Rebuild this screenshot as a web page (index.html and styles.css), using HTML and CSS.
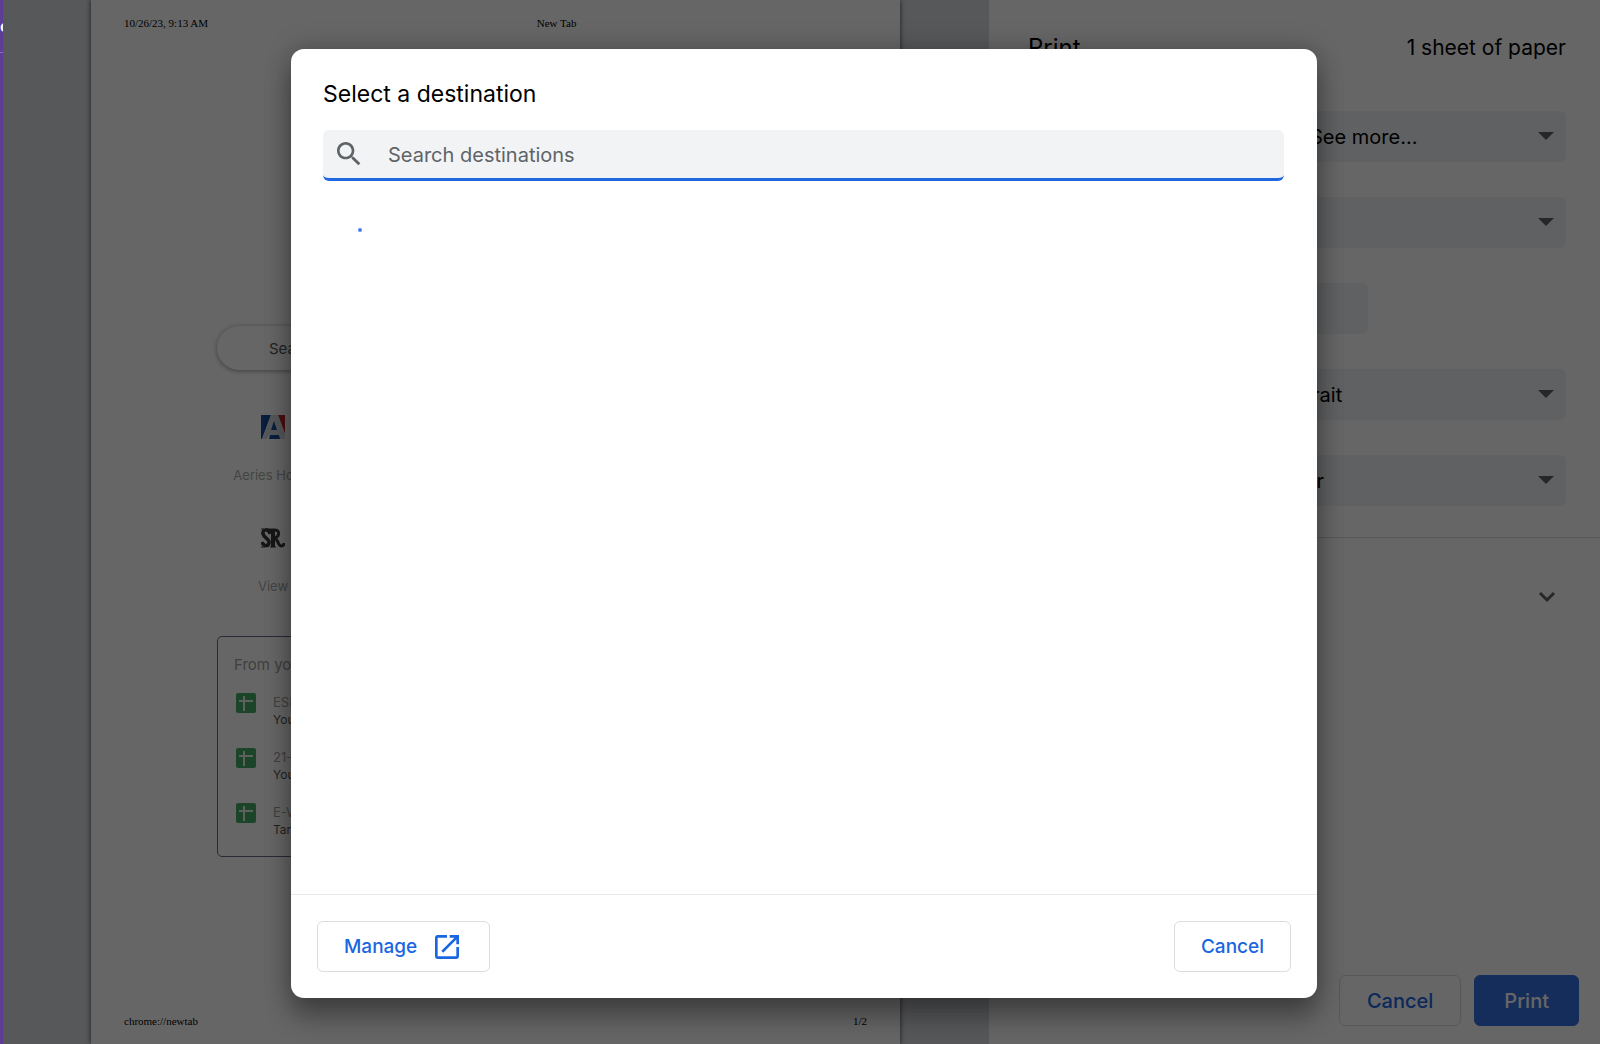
FILE: index.html
```html
<!DOCTYPE html>
<html lang="en">
<head>
<meta charset="utf-8">
<title>Print</title>
<link rel="stylesheet" href="styles.css">
</head>
<body>
<aside class="edge"><span class="edge-text">e</span></aside>
<div class="window">
  <main class="preview">
    <article class="sheet">
      <header class="sheet-head"><span>10/26/23, 9:13 AM</span><span>New Tab</span></header>
      <div class="newtab">
        <div class="omnibox">Search Google or type a URL</div>
        <div class="tile">
          <svg class="tile-icon" viewBox="0 0 24 24"><path fill="#1a4c9c" d="M0 0h10L1 24H0z"/><path fill="#c0242c" d="M17 0h7v19z"/><path fill="#d8dae2" d="M10 0h7l7 19v5h-5l-1-4H8l-2 4H1z"/><path fill="#1a4c9c" d="M13 6l3 9h-6zM9 20h9l1 4H8z"/></svg>
          <span>Aeries Home</span>
        </div>
        <div class="tile">
          <svg class="tile-icon" viewBox="0 0 24 24" fill="none" stroke="#3a3a3a"><path stroke-width="3.500" d="M9 8C8 2 1 3 2 8c1 4 7 5 6 9-1 4-6 3-7-1"/><path stroke-width="4" d="M12 3v18"/><path stroke-width="3" d="M8 4h6c5 0 5 7-1 8 4 0 4 8 7 8 2 0 3-1 3-3"/><path stroke-width="1" d="M0 21h4M9 21h6M0 3h3M8 3v5"/></svg>
          <span>View</span>
        </div>
        <section class="drive">
          <h2 class="drive-title">From your Google Drive</h2>
          <div class="file"><svg class="file-icon" viewBox="0 0 20 20"><rect width="20" height="20" rx="2" fill="#45aa66"/><path d="M3 8h14M8 3v15" stroke="#e4f2e8" stroke-width="2"/></svg><div><div class="file-name">ESL</div><div class="file-note">You opened</div></div></div>
          <div class="file"><svg class="file-icon" viewBox="0 0 20 20"><rect width="20" height="20" rx="2" fill="#45aa66"/><path d="M3 8h14M8 3v15" stroke="#e4f2e8" stroke-width="2"/></svg><div><div class="file-name">21-22</div><div class="file-note">You opened</div></div></div>
          <div class="file"><svg class="file-icon" viewBox="0 0 20 20"><rect width="20" height="20" rx="2" fill="#45aa66"/><path d="M3 8h14M8 3v15" stroke="#e4f2e8" stroke-width="2"/></svg><div><div class="file-name">E-Waste</div><div class="file-note">Tan edited</div></div></div>
        </section>
      </div>
      <footer class="sheet-foot"><span>chrome://newtab</span><span>1/2</span></footer>
    </article>
  </main>
  <form class="settings">
    <header class="settings-head"><h1 class="settings-title">Print</h1><span>1 sheet of paper</span></header>
    <div class="fields">
      <div class="field"><label for="dest">Destination</label><div class="control"><select id="dest" class="with-icon"><option>See more...</option></select></div></div>
      <div class="field"><label for="pages">Pages</label><div class="control"><select id="pages"><option>All</option></select></div></div>
      <div class="field"><label for="copies">Copies</label><div class="short"><input id="copies" type="text" value="1"></div></div>
      <div class="field"><label for="layout">Layout</label><div class="control"><select id="layout"><option>Portrait</option></select></div></div>
      <div class="field"><label for="color">Color</label><div class="control"><select id="color"><option>Color</option></select></div></div>
    </div>
    <button type="button" class="more"><span>More settings</span><svg width="24" height="24" viewBox="0 0 24 24"><path d="M5 8l7 7 7-7" fill="none" stroke="#5f6368" stroke-width="3"/></svg></button>
    <div class="actions"><button type="button" class="btn">Cancel</button><button type="button" class="btn primary">Print</button></div>
  </form>
  <div class="scrim">
    <section class="dialog" role="dialog" aria-labelledby="dialog-title">
      <div class="dialog-body">
        <h2 id="dialog-title" class="dialog-title">Select a destination</h2>
        <div class="search">
          <svg width="32" height="32" viewBox="0 0 24 24" fill="#5f6368"><path d="M15.500 14h-.79l-.28-.27C15.410 12.590 16 11.110 16 9.500 16 5.910 13.090 3 9.500 3S3 5.910 3 9.500 5.910 16 9.500 16c1.610 0 3.090-.59 4.230-1.570l.27.28v.79l5 4.990L20.490 19l-4.990-5zm-6 0C7.010 14 5 11.990 5 9.500S7.010 5 9.500 5 14 7.010 14 9.500 11.990 14 9.500 14z"/></svg>
          <input type="text" placeholder="Search destinations" aria-label="Search destinations">
        </div>
        <div class="spinner"></div>
      </div>
      <footer class="dialog-foot">
        <button type="button" class="btn">Manage<svg width="32" height="32" viewBox="0 0 24 24" fill="#1a66e0"><path d="M19 19H5V5h7V3H5c-1.110 0-2 .9-2 2v14c0 1.100.89 2 2 2h14c1.100 0 2-.9 2-2v-7h-2v7zM14 3v2h3.590l-9.830 9.830 1.410 1.410L19 6.410V10h2V3h-7z"/></svg></button>
        <button type="button" class="btn">Cancel</button>
      </footer>
    </section>
  </div>
</div>
</body>
</html>
```
FILE: styles.css
```css
* { box-sizing: border-box; }
body {
  margin: 0;
  min-height: 100vh;
  display: flex;
  font-family: Inter, "Liberation Sans", sans-serif;
  font-size: 20px;
  color: #000;
}
h1, h2 { margin: 0; font-weight: 400; }
input, select, button { font: inherit; color: inherit; }

.edge {
  width: 3px;
  padding-top: 14px;
  overflow: hidden;
  background: #5d3d96;
  color: #fff;
  font-size: 16px;
  font-weight: 600;
  line-height: 24px;
  display: flex;
  align-items: flex-start;
}
.edge-text {
  flex: 1;
  display: flex;
  justify-content: flex-end;
  height: 39px;
  border-bottom: 1px solid #8a70b8;
}

.window { position: relative; flex: 1; min-width: 0; display: flex; }

.preview { flex: 1; display: flex; padding: 0 89px 0 88px; background: #dadce0; }
.sheet {
  flex: 1;
  display: flex;
  flex-direction: column;
  padding: 16px 33px;
  background: #fff;
  box-shadow: 0 0 5px rgba(0, 0, 0, .7);
}
.sheet-head, .sheet-foot { font: 11px/14px "Liberation Serif", serif; }
.sheet-head { display: grid; grid-template-columns: 5fr 4fr; }
.sheet-foot { display: flex; justify-content: space-between; }
.newtab { flex: 1; padding: 296px 93px 0; }
.omnibox {
  height: 44px;
  padding-left: 52px;
  border-radius: 22px;
  line-height: 45px;
  font-size: 15px;
  color: #555;
  box-shadow: 0 1px 5px rgba(0, 0, 0, .4);
}
.tile {
  width: 112px;
  height: 111px;
  padding-top: 45px;
  display: flex;
  flex-direction: column;
  align-items: center;
  gap: 28px;
  font-size: 13px;
  line-height: 16px;
  color: #aaa;
}
.tile-icon { flex: none; width: 24px; height: 24px; }
.drive {
  height: 221px;
  margin-top: 44px;
  padding: 18px 16px;
  border: 1px solid #6c6590;
  border-radius: 5px;
}
.drive-title { font-size: 15px; line-height: 19px; color: #a0a0a0; }
.file { display: flex; gap: 17px; padding: 19px 2px 0; }
.file-icon { flex: none; width: 20px; height: 20px; }
.file-name, .file-note { line-height: 18px; }
.file-name { font-size: 13px; color: #a0a0a0; }
.file-note { font-size: 12px; color: #555; }

.settings { width: 611px; display: flex; flex-direction: column; background: #fff; }
.settings-head {
  display: flex;
  justify-content: space-between;
  align-items: center;
  padding: 32px 34px 0 39px;
  font-size: 21px;
  line-height: 32px;
}
.settings-title { font-size: 24px; }
.fields {
  display: flex;
  flex-direction: column;
  gap: 35px;
  margin-top: 47px;
  padding: 0 34px 31px 40px;
  border-bottom: 1px solid #dadce0;
}
.field { display: flex; align-items: center; justify-content: space-between; }
.control, .short { width: 318px; height: 51px; position: relative; }
.control::after {
  content: "";
  position: absolute;
  right: 12px;
  top: 21px;
  border: 8px solid transparent;
  border-top-color: #5f6368;
  border-bottom: 0;
  pointer-events: none;
}
.field select, .field input {
  width: 100%;
  height: 51px;
  padding: 0 25px;
  appearance: none;
  border: 0;
  border-radius: 6px;
  background: #f1f3f4;
}
.field select.with-icon { padding-left: 62px; }
.short input { width: 120px; }
.more {
  display: flex;
  justify-content: space-between;
  align-items: center;
  height: 118px;
  padding: 0 41px 0 40px;
  border: 0;
  background: none;
}
.actions { margin-top: auto; display: flex; justify-content: flex-end; gap: 13px; padding: 0 21px 18px 0; }

.btn {
  display: flex;
  align-items: center;
  gap: 14px;
  height: 51px;
  padding: 0 26px;
  border: 1px solid #dadce0;
  border-radius: 6px;
  background: none;
  color: #1a66e0;
  font-size: 19px;
  font-weight: 500;
}
.actions .btn { font-size: 20px; padding: 0 27px; }
.actions .primary { padding: 0 29px; border-color: #3670e0; background: #3670e0; color: #fff; }

.scrim {
  position: absolute;
  inset: 0;
  display: flex;
  padding: 49px 283px 46px 288px;
  background: rgba(0, 0, 0, .6);
}
.dialog {
  flex: 1;
  display: flex;
  flex-direction: column;
  border-radius: 13px;
  background: #fff;
  box-shadow: 0 0 26px rgba(0, 0, 0, .25), 0 20px 26px rgba(0, 0, 0, .3);
}
.dialog-body { flex: 1; padding: 29px 33px 0 32px; }
.dialog-title { font-size: 23px; line-height: 32px; }
.search {
  display: flex;
  align-items: center;
  gap: 23px;
  height: 51px;
  margin-top: 20px;
  padding-left: 10px;
  border-bottom: 3px solid #2068e0;
  border-radius: 6px;
  background: #f1f3f4;
}
.search input { flex: 1; min-width: 0; padding: 2px 0 0; border: 0; outline: 0; background: none; }
.search input::placeholder { color: #5f6368; opacity: 1; }
.spinner { width: 4px; height: 4px; margin: 47px 35px; border-radius: 50%; background: #4a80e8; }
.dialog-foot {
  display: flex;
  justify-content: space-between;
  padding: 26px;
  border-top: 1px solid #e8eaed;
}
```
